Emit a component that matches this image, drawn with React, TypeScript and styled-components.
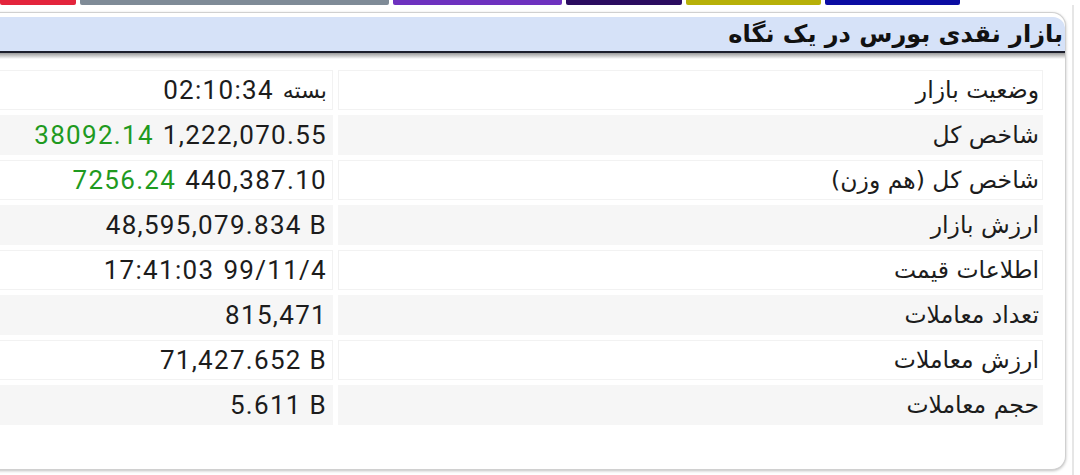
import React from "react";
import styled, { createGlobalStyle } from "styled-components";

const Global = createGlobalStyle`
  html, body { margin: 0; padding: 0; background: #ffffff; }
  body { width: 1080px; height: 475px; overflow: hidden; font-family: "DejaVu Sans", sans-serif; }
`;

const Page = styled.div`
  display: flex;
  flex-direction: column;
  width: 1080px;
  height: 475px;
  overflow: hidden;
`;

const TabStrip = styled.div`
  display: flex;
  gap: 4px;
  height: 5px;
  flex: none;
`;

const Tab = styled.div<{ $w: number; $c: string }>`
  width: ${(p) => p.$w}px;
  background: ${(p) => p.$c};
  border-radius: 0 0 2px 2px;
`;

const Frame = styled.div`
  flex: 1;
  display: flex;
  width: 1074px;
  border-right: 2px solid #e6e6e6;
  padding-top: 7px;
  padding-bottom: 5px;
  box-sizing: border-box;
`;

const Card = styled.div`
  margin-left: -24px;
  width: 1090px;
  height: 458px;
  background: #fff;
  border: 1px solid #d0d0d0;
  border-left: none;
  border-radius: 0 14px 14px 0;
  box-shadow: 0 1px 3px rgba(0, 0, 0, 0.25);
  padding-top: 4px;
  box-sizing: border-box;
  display: flex;
  flex-direction: column;
`;

const Header = styled.div`
  height: 34px;
  background: #d6e2f8;
  border-bottom: 2px solid #1d1f2c;
  border-radius: 0 12px 0 0;
  display: flex;
  align-items: center;
  justify-content: flex-end;
  padding-right: 2px;
  position: relative;
  &::after {
    content: "";
    position: absolute;
    left: 0;
    right: 0;
    top: 36px;
    height: 6px;
    background: linear-gradient(#9a9a9a, rgba(255, 255, 255, 0));
  }
`;

const Title = styled.h1`
  margin: 0;
  direction: rtl;
  font-family: "DejaVu Sans", sans-serif;
  font-weight: bold;
  font-size: 24px;
  color: #111;
`;

const Table = styled.div`
  direction: rtl;
  display: flex;
  flex-direction: column;
  gap: 5px;
  padding: 17px 22px 0 0;
`;

const Row = styled.div<{ $alt: boolean }>`
  display: grid;
  grid-template-columns: 705px 1fr;
  gap: 5px;
  height: 40px;
  & > div {
    background: ${(p) => (p.$alt ? "#f6f6f6" : "#ffffff")};
    box-shadow: ${(p) => (p.$alt ? "none" : "inset 0 0 0 1px #f2f2f2")};
  }
`;

const Label = styled.div`
  display: flex;
  align-items: center;
  padding-right: 4px;
  font-family: "DejaVu Sans", sans-serif;
  font-size: 23.5px;
  color: #1c1c1c;
`;

const Value = styled.div`
  direction: ltr;
  display: flex;
  align-items: center;
  justify-content: flex-end;
  gap: 9px;
  padding-right: 6px;
  font-family: Roboto, "DejaVu Sans", sans-serif;
  font-size: 26px;
  letter-spacing: 1.3px;
  color: #1c1c1c;
`;

const Word = styled.span`
  font-family: "DejaVu Sans", sans-serif;
  font-size: 22px;
  letter-spacing: 0;
  direction: rtl;
`;

const Change = styled.span`
  color: #1f9a1f;
`;

const tabs = [
  { w: 76, c: "#e3243c" },
  { w: 309, c: "#7f8b97" },
  { w: 169, c: "#6e31bf" },
  { w: 116, c: "#2b0c60" },
  { w: 135, c: "#b7b008" },
  { w: 135, c: "#0b0ca2" },
];

type Item = { label: string; value: React.ReactNode };

const items: Item[] = [
  { label: "وضعیت بازار", value: (<><span>02:10:34</span><Word>بسته</Word></>) },
  { label: "شاخص کل", value: (<><Change>38092.14</Change><span>1,222,070.55</span></>) },
  { label: "شاخص کل (هم وزن)", value: (<><Change>7256.24</Change><span>440,387.10</span></>) },
  { label: "ارزش بازار", value: <span>48,595,079.834 B</span> },
  { label: "اطلاعات قیمت", value: (<><span>17:41:03</span><span>99/11/4</span></>) },
  { label: "تعداد معاملات", value: <span>815,471</span> },
  { label: "ارزش معاملات", value: <span>71,427.652 B</span> },
  { label: "حجم معاملات", value: <span>5.611 B</span> },
];

export default function App() {
  return (
    <Page>
      <Global />
      <TabStrip>
        {tabs.map((t, i) => (
          <Tab key={i} $w={t.w} $c={t.c} />
        ))}
      </TabStrip>
      <Frame>
        <Card>
          <Header>
            <Title>بازار نقدی بورس در یک نگاه</Title>
          </Header>
          <Table>
            {items.map((it, i) => (
              <Row key={i} $alt={i % 2 === 1}>
                <Label>{it.label}</Label>
                <Value>{it.value}</Value>
              </Row>
            ))}
          </Table>
        </Card>
      </Frame>
    </Page>
  );
}
